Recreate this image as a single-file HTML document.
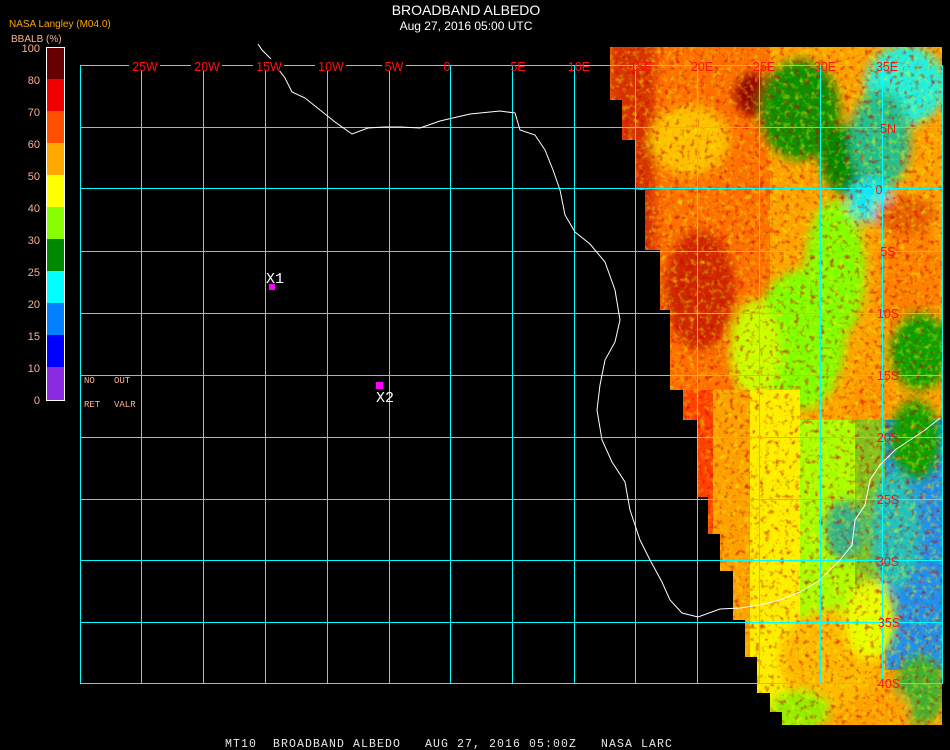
<!DOCTYPE html>
<html><head><meta charset="utf-8"><style>
html,body{margin:0;padding:0;background:#000;}
body{width:950px;height:750px;overflow:hidden;position:relative;font-family:"Liberation Sans",sans-serif;}
svg{position:absolute;left:0;top:0}
</style></head><body>
<svg width="950" height="750" viewBox="0 0 950 750">
<defs>
<clipPath id="dc"><polygon points="610,47 942,47 942,725 782,725 782,712 770,712 770,693 757,693 757,657 745,657 745,620 733,620 733,571 720,571 720,534 708,534 708,497 697,497 697,420 683,420 683,390 670,390 670,310 660,310 660,250 645,250 645,190 635,190 635,140 622,140 622,100 610,100"/></clipPath>
<filter id="nz" x="0" y="0" width="100%" height="100%">
<feTurbulence type="fractalNoise" baseFrequency="0.2" numOctaves="2" seed="4"/>
<feColorMatrix type="matrix" values="0 0 0 0 0.6  0 0 0 0 0  0 0 0 0 0  0 0 0 3 -1.6"/>
</filter>
<filter id="nz2" x="0" y="0" width="100%" height="100%">
<feTurbulence type="fractalNoise" baseFrequency="0.18" numOctaves="2" seed="9"/>
<feColorMatrix type="matrix" values="0 0 0 0 1  0 0 0 0 1  0 0 0 0 0  0 0 0 3 -1.6"/>
</filter>
<filter id="nz3" x="0" y="0" width="100%" height="100%">
<feTurbulence type="fractalNoise" baseFrequency="0.2" numOctaves="2" seed="17"/>
<feColorMatrix type="matrix" values="0 0 0 0 0.5  0 0 0 0 1  0 0 0 0 0  0 0 0 3 -1.7"/>
</filter>
<filter id="bl"><feGaussianBlur stdDeviation="5"/></filter>
</defs>
<g clip-path="url(#dc)">
<rect x="600" y="40" width="350" height="700" fill="#ffa000"/>
<rect x="600" y="40" width="170" height="380" fill="#ff7000"/>
<g filter="url(#bl)">
<rect x="610" y="40" width="45" height="380" fill="#d83000"/>
<ellipse cx="700" cy="290" rx="35" ry="60" fill="#d02800"/>
<ellipse cx="755" cy="95" rx="20" ry="22" fill="#900000"/>
<ellipse cx="690" cy="140" rx="40" ry="35" fill="#ffc000"/>
<ellipse cx="800" cy="110" rx="40" ry="50" fill="#109000"/>
<ellipse cx="905" cy="85" rx="40" ry="40" fill="#20f0e0"/>
<ellipse cx="850" cy="160" rx="30" ry="35" fill="#008800"/>
<ellipse cx="880" cy="140" rx="30" ry="50" fill="#20c090"/>
<ellipse cx="870" cy="200" rx="22" ry="22" fill="#10e8ff"/>
<ellipse cx="835" cy="270" rx="30" ry="70" fill="#80ff00"/>
<ellipse cx="800" cy="340" rx="45" ry="70" fill="#80ff00"/>
<ellipse cx="755" cy="350" rx="25" ry="50" fill="#c8ff00"/>
<ellipse cx="910" cy="280" rx="35" ry="60" fill="#ff8000"/>
<ellipse cx="905" cy="215" rx="30" ry="20" fill="#e86000"/>
<ellipse cx="920" cy="350" rx="30" ry="40" fill="#10a000"/>
<ellipse cx="870" cy="400" rx="20" ry="20" fill="#ff9000"/>
</g>
<rect x="683" y="390" width="30" height="340" fill="#ff4000"/>
<rect x="713" y="390" width="37" height="340" fill="#ffa000"/>
<rect x="750" y="390" width="50" height="340" fill="#ffee00"/>
<rect x="800" y="420" width="55" height="200" fill="#a8ff00"/>
<rect x="855" y="420" width="30" height="200" fill="#80c020"/>
<rect x="885" y="420" width="57" height="250" fill="#2090f0"/>
<g filter="url(#bl)">
<ellipse cx="915" cy="440" rx="25" ry="40" fill="#10a000"/>
<ellipse cx="895" cy="530" rx="25" ry="60" fill="#20c0c0"/>
<ellipse cx="845" cy="530" rx="20" ry="30" fill="#30b090"/>
<ellipse cx="830" cy="660" rx="50" ry="50" fill="#ffb800"/>
<ellipse cx="870" cy="620" rx="25" ry="40" fill="#e8ff00"/>
<ellipse cx="920" cy="690" rx="25" ry="35" fill="#40b030"/>
<ellipse cx="800" cy="710" rx="30" ry="20" fill="#90f000"/>
<ellipse cx="880" cy="710" rx="30" ry="20" fill="#ffa000"/>
</g>
<rect x="600" y="40" width="350" height="700" filter="url(#nz)" opacity="0.7"/>
<rect x="600" y="40" width="350" height="700" filter="url(#nz2)" opacity="0.5"/>
<rect x="600" y="40" width="350" height="700" filter="url(#nz3)" opacity="0.5"/>
</g>
<g fill="#00ffff">
<rect x="80" y="65" width="1" height="619"/>
<rect x="141" y="65" width="1" height="619"/><rect x="203" y="65" width="1" height="619"/><rect x="265" y="65" width="1" height="619"/><rect x="327" y="65" width="1" height="619"/><rect x="389" y="65" width="1" height="619"/><rect x="450" y="65" width="1" height="619"/><rect x="512" y="65" width="1" height="619"/><rect x="574" y="65" width="1" height="619"/><rect x="635" y="65" width="1" height="619"/><rect x="697" y="65" width="1" height="619"/><rect x="759" y="65" width="1" height="619"/><rect x="820" y="65" width="1" height="619"/><rect x="882" y="65" width="1" height="619"/><rect x="942" y="65" width="1" height="619"/>
<rect x="80" y="65" width="863" height="1"/><rect x="80" y="127" width="863" height="1"/><rect x="80" y="188" width="863" height="1"/><rect x="80" y="251" width="863" height="1"/><rect x="80" y="313" width="863" height="1"/><rect x="80" y="375" width="863" height="1"/><rect x="80" y="437" width="863" height="1"/><rect x="80" y="499" width="863" height="1"/><rect x="80" y="560" width="863" height="1"/><rect x="80" y="622" width="863" height="1"/><rect x="80" y="683" width="863" height="1"/>
</g>
<polyline fill="none" stroke="#fff" stroke-width="1" points="258,44 262,50 270,58 285,78 292,92 305,98 320,110 335,122 352,134 368,128 385,127 400,127 420,128 440,121 470,114 500,111 515,113 520,130 535,135 545,150 553,170 560,190 565,215 575,232 590,244 605,262 615,290 620,320 615,342 605,360 600,385 597,410 602,440 612,462 625,482 630,510 640,540 650,560 662,582 670,600 682,613 698,617 720,609 740,608 760,605 780,600 800,592 820,580 840,560 852,545 855,520 865,505 870,480 880,465 895,450 910,440 925,430 940,418"/>
<g>
<rect x="46" y="47" width="19" height="32" fill="#660000"/>
<rect x="46" y="79" width="19" height="32" fill="#f00000"/>
<rect x="46" y="111" width="19" height="32" fill="#ff5000"/>
<rect x="46" y="143" width="19" height="32" fill="#ffa800"/>
<rect x="46" y="175" width="19" height="32" fill="#ffff00"/>
<rect x="46" y="207" width="19" height="32" fill="#88ff00"/>
<rect x="46" y="239" width="19" height="32" fill="#008800"/>
<rect x="46" y="271" width="19" height="32" fill="#00ffff"/>
<rect x="46" y="303" width="19" height="32" fill="#0080ff"/>
<rect x="46" y="335" width="19" height="32" fill="#0000ff"/>
<rect x="46" y="367" width="19" height="33" fill="#8a2be2"/>
<rect x="46.5" y="47.5" width="18" height="353" fill="none" stroke="#fff" stroke-width="1"/>
</g>
<g font-family="Liberation Sans, sans-serif" font-size="11" fill="#ffb090" text-anchor="end">
<text x="40" y="52">100</text><text x="40" y="84">80</text><text x="40" y="116">70</text><text x="40" y="148">60</text><text x="40" y="180">50</text><text x="40" y="212">40</text><text x="40" y="244">30</text><text x="40" y="276">25</text><text x="40" y="308">20</text><text x="40" y="340">15</text><text x="40" y="372">10</text><text x="40" y="404">0</text>
</g>
<text x="9" y="27" font-size="10" fill="#ffa500" font-family="Liberation Sans, sans-serif">NASA Langley (M04.0)</text>
<text x="11" y="42" font-size="10" fill="#ffb090" font-family="Liberation Sans, sans-serif">BBALB (%)</text>
<g font-family="Liberation Mono, monospace" font-size="9" fill="#ffb090">
<text x="84" y="383">NO</text><text x="114" y="383">OUT</text><text x="84" y="407">RET</text><text x="114" y="407">VALR</text>
</g>
<text x="466" y="15" font-size="14" fill="#fff" text-anchor="middle" font-family="Liberation Sans, sans-serif">BROADBAND ALBEDO</text>
<text x="466" y="30" font-size="12" fill="#fff" text-anchor="middle" font-family="Liberation Sans, sans-serif">Aug 27, 2016 05:00 UTC</text>
<g font-family="Liberation Sans, sans-serif" font-size="12.5" fill="#ff1010" text-anchor="middle">
<g fill="#000"><rect x="129" y="59" width="31" height="12"/><rect x="191" y="59" width="31" height="12"/><rect x="253" y="59" width="31" height="12"/><rect x="315" y="59" width="31" height="12"/><rect x="382" y="59" width="24" height="12"/></g>
<text x="145" y="71">25W</text><text x="207" y="71">20W</text><text x="269" y="71">15W</text><text x="331" y="71">10W</text><text x="394" y="71">5W</text><text x="447" y="71">0</text><text x="518" y="71">5E</text><text x="579" y="71">10E</text><text x="641" y="71">15E</text><text x="702" y="71">20E</text><text x="764" y="71">25E</text><text x="825" y="71">30E</text><text x="887" y="71">35E</text>
<text x="888" y="133">5N</text><text x="879" y="194">0</text><text x="888" y="256">5S</text><text x="888" y="318">10S</text><text x="888" y="380">15S</text><text x="888" y="442">20S</text><text x="888" y="504">25S</text><text x="888" y="566">30S</text><text x="889" y="627">35S</text><text x="889" y="688">40S</text>
</g>
<rect x="269" y="284" width="6" height="6" fill="#ff00ff"/>
<text x="266" y="283" font-size="15" fill="#fff" font-family="Liberation Mono, monospace">X1</text>
<rect x="376" y="382" width="7" height="7" fill="#ff00ff"/>
<text x="376" y="402" font-size="15" fill="#fff" font-family="Liberation Mono, monospace">X2</text>
<text x="225" y="747" font-size="11.5" fill="#e8e8e8" font-family="Liberation Mono, monospace" letter-spacing="1.1" xml:space="preserve">MT10  BROADBAND ALBEDO   AUG 27, 2016 05:00Z   NASA LARC</text>
</svg>
</body></html>
